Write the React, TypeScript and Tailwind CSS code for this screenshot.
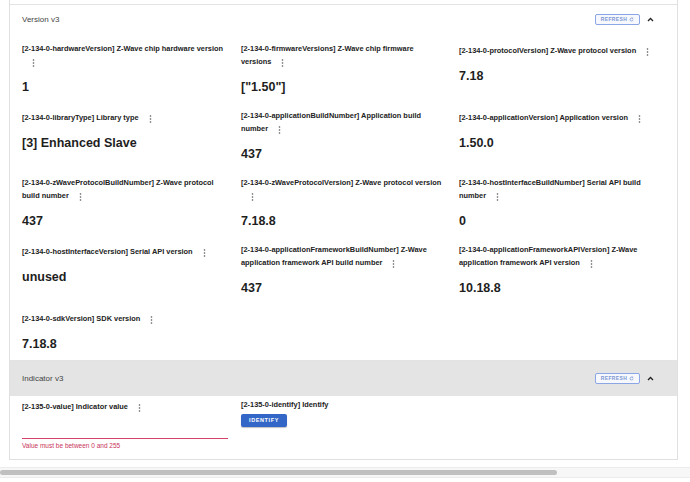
import React from 'react';

interface Field {
  id: string;
  label: string;
  value: string;
}

const versionFields: Field[] = [
  { id: 'hardwareVersion', label: 'Z-Wave chip hardware version', value: '1' },
  { id: 'firmwareVersions', label: 'Z-Wave chip firmware versions', value: '["1.50"]' },
  { id: 'protocolVersion', label: 'Z-Wave protocol version', value: '7.18' },
  { id: 'libraryType', label: 'Library type', value: '[3] Enhanced Slave' },
  { id: 'applicationBuildNumber', label: 'Application build number', value: '437' },
  { id: 'applicationVersion', label: 'Application version', value: '1.50.0' },
  { id: 'zWaveProtocolBuildNumber', label: 'Z-Wave protocol build number', value: '437' },
  { id: 'zWaveProtocolVersion', label: 'Z-Wave protocol version', value: '7.18.8' },
  { id: 'hostInterfaceBuildNumber', label: 'Serial API build number', value: '0' },
  { id: 'hostInterfaceVersion', label: 'Serial API version', value: 'unused' },
  { id: 'applicationFrameworkBuildNumber', label: 'Z-Wave application framework API build number', value: '437' },
  { id: 'applicationFrameworkAPIVersion', label: 'Z-Wave application framework API version', value: '10.18.8' },
  { id: 'sdkVersion', label: 'SDK version', value: '7.18.8' },
];

const Kebab = () => (
  <span className="inline-flex h-[17px] w-[17px] items-center justify-center align-middle ml-[3px]">
    <svg width="3" height="8" viewBox="0 0 3 8" fill="#555">
      <circle cx="1.5" cy="1" r="0.8" />
      <circle cx="1.5" cy="4" r="0.8" />
      <circle cx="1.5" cy="7" r="0.8" />
    </svg>
  </span>
);

const PanelHeader: React.FC<{ title: string; gray?: boolean; tall?: boolean }> = ({ title, gray, tall }) => (
  <div
    className={`flex items-center px-[12px] border-t border-[#e3e3e3] ${gray ? 'bg-[#e4e4e4]' : 'bg-white'} ${
      tall ? 'h-[36px]' : 'h-[30px]'
    }`}
  >
    <span className="text-[8px] text-[#444]">{title}</span>
    <div className="ml-auto flex items-center gap-[7px] pr-[11px]">
      <button className="flex h-[11px] w-[45px] items-center justify-center gap-[2px] rounded-[2px] border-[1.5px] border-[#8aa6e4] bg-[#f6f8fd] text-[5px] font-bold tracking-[0.4px] text-[#7d97d4]">
        REFRESH
        <svg width="5" height="5" viewBox="0 0 10 10" fill="none" stroke="#7d97d4" strokeWidth="1.4">
          <path d="M8 5a3 3 0 1 1-1-2.2" />
          <path d="M7.4 1v2h-2" />
        </svg>
      </button>
      <svg width="7" height="5" viewBox="0 0 7 5" fill="none" stroke="#222" strokeWidth="1.3">
        <path d="M1 4l2.5-2.5L6 4" />
      </svg>
    </div>
  </div>
);

const FieldItem: React.FC<{ field: Field }> = ({ field }) => (
  <div>
    <div className="w-[203px] text-[7.4px] leading-[11px] font-bold text-[#222]">
      [2-134-0-{field.id}] {field.label}
      <Kebab />
    </div>
    <div className="mt-[8px] text-[12.5px] leading-[17px] font-bold text-[#1e1e1e]">{field.value}</div>
  </div>
);

export default function App() {
  return (
    <div className="relative h-[482px] w-[690px] overflow-hidden bg-white font-['Liberation_Sans',Arial,sans-serif]">
      <div className="ml-[9px] w-[669px] border-x border-b border-[#e0e0e0]">
        <div className="h-[4px]" />
        <PanelHeader title="Version v3" />
        <div className="grid grid-cols-[219px_218px_219px] gap-y-[14px] px-[12px] pt-[9px] pb-[7px]">
          {versionFields.map((f) => (
            <FieldItem key={f.id} field={f} />
          ))}
        </div>
        <PanelHeader title="Indicator v3" gray tall />
        <div className="grid grid-cols-[219px_218px_219px] px-[12px] pt-[3px] pb-[9px]">
          <div className="pr-[13px]">
            <div className="text-[7.4px] leading-[11px] font-bold text-[#222]">
              [2-135-0-value] Indicator value
              <Kebab />
            </div>
            <div className="mt-[22px] h-[1px] w-full bg-[#d6416a]" />
            <div className="mt-[3px] text-[6.5px] leading-[8px] text-[#c8345a]">Value must be between 0 and 255</div>
          </div>
          <div>
            <div className="text-[7.4px] leading-[11px] font-bold text-[#222]">[2-135-0-identify] Identify</div>
            <button className="mt-[4px] flex h-[13px] w-[46px] items-center justify-center rounded-[2px] bg-[#3367c7] text-[5.5px] font-bold tracking-[0.6px] text-white shadow-[0_1px_1px_rgba(0,0,0,0.25)]">
              IDENTIFY
            </button>
          </div>
        </div>
      </div>
      <div className="mt-[7px] flex h-[11px] items-center border-y border-[#ececec] bg-[#f7f7f7]">
        <div className="h-[5px] w-[557px] rounded-full bg-[#c0c0c0]" />
      </div>
    </div>
  );
}
